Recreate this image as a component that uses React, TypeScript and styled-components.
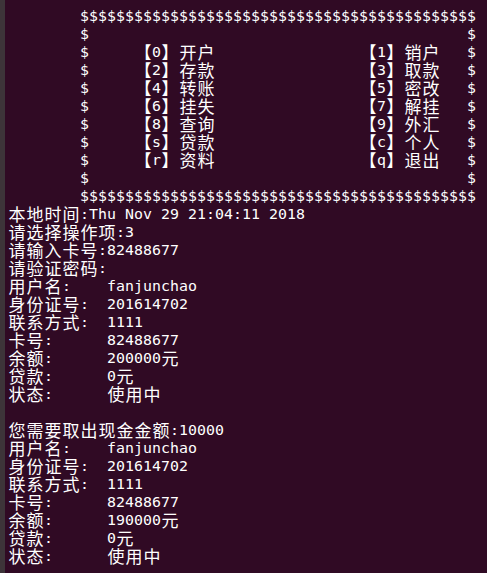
import React from 'react'
import styled, { createGlobalStyle } from 'styled-components'

const GlobalStyle = createGlobalStyle`
  * {
    box-sizing: border-box;
  }
  html, body {
    margin: 0;
    padding: 0;
    background: #300a24;
  }
`

const Terminal = styled.div`
  min-height: 100vh;
  background: #300a24;
  border-left: 5px solid #3d3439;
  padding: 7px 0 0 3px;
  color: #ffffff;
`

const Row = styled.div`
  display: flex;
  height: 18px;
  line-height: 18px;
`

const Cell = styled.span<{ $wide: boolean }>`
  flex: none;
  width: ${({ $wide }) => ($wide ? '18px' : '9px')};
  text-align: center;
  white-space: pre;
  font-family: ${({ $wide }) =>
    $wide
      ? '"Noto Sans CJK SC", "Noto Sans CJK JP", sans-serif'
      : '"DejaVu Sans Mono", "Liberation Mono", monospace'};
  font-size: ${({ $wide }) => ($wide ? '17px' : '14.9px')};
`

const isWide = (c: string) => /[\u2e80-\u9fff\uff00-\uff60]/.test(c)

const pad = (n: number) => ' '.repeat(n)

const border = pad(8) + '$'.repeat(44)
const side = pad(8) + '$' + pad(42) + '$'
const menu = (left: string, right: string) =>
  pad(8) + '$' + pad(5) + left + pad(16) + right + pad(3) + '$'

const account = (balance: string) => [
  '用户名:    fanjunchao',
  '身份证号:  201614702',
  '联系方式:  1111',
  '卡号:      82488677',
  '余额:      ' + balance,
  '贷款:      0元',
  '状态:      使用中',
]

const lines = [
  border,
  side,
  menu('【0】开户', '【1】销户'),
  menu('【2】存款', '【3】取款'),
  menu('【4】转账', '【5】密改'),
  menu('【6】挂失', '【7】解挂'),
  menu('【8】查询', '【9】外汇'),
  menu('【s】贷款', '【c】个人'),
  menu('【r】资料', '【q】退出'),
  side,
  border,
  '本地时间:Thu Nov 29 21:04:11 2018',
  '请选择操作项:3',
  '请输入卡号:82488677',
  '请验证密码:',
  ...account('200000元'),
  '',
  '您需要取出现金金额:10000',
  ...account('190000元'),
]

function TermLine({ text }: { text: string }) {
  return (
    <Row>
      {Array.from(text).map((c, i) => (
        <Cell key={i} $wide={isWide(c)}>
          {c}
        </Cell>
      ))}
    </Row>
  )
}

export default function App() {
  return (
    <>
      <GlobalStyle />
      <Terminal>
        {lines.map((l, i) => (
          <TermLine key={i} text={l} />
        ))}
      </Terminal>
    </>
  )
}
